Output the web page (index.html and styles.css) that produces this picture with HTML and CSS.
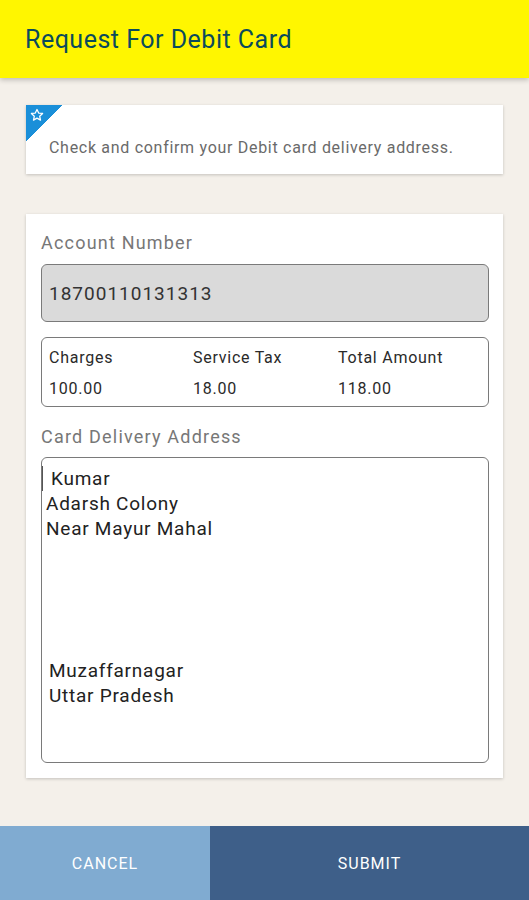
FILE: index.html
```html
<!DOCTYPE html>
<html lang="en">
<head>
    <meta charset="UTF-8">
    <meta name="viewport" content="width=device-width, initial-scale=1.0">
    <title>Request For Debit Card</title>
    <link rel="stylesheet" href="styles.css">
</head>
<body>
    <div id="app">
        <header class="toolbar">
            <h1>Request For Debit Card</h1>
        </header>

        <main class="content">
            <!-- Info note -->
            <div class="note">
                <span class="note-badge">
                    <svg width="14" height="14" viewBox="0 0 24 24">
                        <path d="M12 2.5l2.9 6.2 6.7.7-5 4.6 1.4 6.7L12 17.3l-6 3.4 1.4-6.7-5-4.6 6.7-.7z" fill="none" stroke="#fff" stroke-width="2.2" stroke-linejoin="round"/>
                    </svg>
                </span>
                <p>Check and confirm your Debit card delivery address.</p>
            </div>

            <!-- Form card -->
            <div class="card">
                <label class="field-label">Account Number</label>
                <div class="account-box">18700110131313</div>

                <div class="charges">
                    <div class="charge-col">
                        <span class="charge-name">Charges</span>
                        <span class="charge-value">100.00</span>
                    </div>
                    <div class="charge-col">
                        <span class="charge-name">Service Tax</span>
                        <span class="charge-value">18.00</span>
                    </div>
                    <div class="charge-col">
                        <span class="charge-name">Total Amount</span>
                        <span class="charge-value">118.00</span>
                    </div>
                </div>

                <label class="field-label address-label">Card Delivery Address</label>
                <div class="address-box">
                    <div class="addr-line first">Kumar</div>
                    <div class="addr-line">Adarsh Colony</div>
                    <div class="addr-line">Near Mayur Mahal</div>
                    <div class="addr-gap"></div>
                    <div class="addr-line city">Muzaffarnagar</div>
                    <div class="addr-line city">Uttar Pradesh</div>
                </div>
            </div>
        </main>

        <footer class="actions">
            <button class="btn-cancel">Cancel</button>
            <button class="btn-submit">Submit</button>
        </footer>
    </div>
</body>
</html>
```

FILE: styles.css
```css
/* General Page Styling */
body {
    margin: 0;
    background-color: #f4f0ea;
    font-family: Roboto, "Noto Sans", Arial, sans-serif;
}

#app {
    height: 900px;
    display: flex;
    flex-direction: column;
    overflow: hidden;
}

/* Toolbar */
.toolbar {
    height: 78px;
    background-color: #fff600;
    box-shadow: 0 2px 5px rgba(0, 0, 0, 0.22);
    display: flex;
    align-items: center;
    padding-left: 25px;
    position: relative;
    z-index: 1;
}

.toolbar h1 {
    margin: 0;
    font-size: 25px;
    letter-spacing: 0.5px;
    font-weight: 400;
    color: #0b4b5c;
    padding-top: 1px;
}

.content {
    flex: 1;
    padding: 27px 26px 0 26px;
}

/* Info note */
.note {
    position: relative;
    background-color: #ffffff;
    height: 69px;
    box-shadow: 0 1px 3px rgba(0, 0, 0, 0.2);
    overflow: hidden;
}

.note-badge {
    position: absolute;
    top: 0;
    left: 0;
    width: 36px;
    height: 36px;
    background: linear-gradient(135deg, #1a8fd9 50%, transparent 50%);
}

.note-badge svg {
    position: absolute;
    top: 3px;
    left: 4px;
}

.note p {
    margin: 0;
    padding: 33px 0 0 23px;
    font-size: 16px;
    letter-spacing: 0.7px;
    color: #6a6a6a;
}

/* Form card */
.card {
    margin-top: 40px;
    background-color: #ffffff;
    box-shadow: 0 1px 3px rgba(0, 0, 0, 0.2);
    padding: 18px 14px 15px 15px;
}

.field-label {
    display: block;
    font-size: 18px;
    letter-spacing: 1.2px;
    color: #777777;
    line-height: 22px;
}

.account-box {
    margin-top: 10px;
    height: 58px;
    box-sizing: border-box;
    border: 1px solid #7a7a7a;
    border-radius: 6px;
    background-color: #dadada;
    display: flex;
    align-items: center;
    padding-left: 7px;
    font-size: 19px;
    letter-spacing: 1px;
    color: #333333;
}

.charges {
    margin-top: 15px;
    height: 70px;
    box-sizing: border-box;
    border: 1px solid #7a7a7a;
    border-radius: 6px;
    display: grid;
    grid-template-columns: 144px 145px 1fr;
    padding: 10px 0 0 7px;
}

.charge-col {
    display: flex;
    flex-direction: column;
    gap: 11px;
}

.charge-name,
.charge-value {
    font-size: 16px;
    letter-spacing: 0.75px;
    color: #2a2a2a;
    line-height: 20px;
}

.address-label {
    margin-top: 19px;
}

.address-box {
    margin-top: 9px;
    height: 306px;
    box-sizing: border-box;
    border: 1px solid #7a7a7a;
    border-radius: 6px;
    padding: 8px 0 0 4px;
}

.addr-line {
    font-size: 19px;
    letter-spacing: 0.75px;
    color: #222222;
    line-height: 25px;
}

.addr-line.first {
    border-left: 1px solid #555555;
    margin-left: -4px;
    padding-left: 8px;
}

.addr-line.city {
    padding-left: 3px;
}

.addr-gap {
    height: 117px;
}

/* Bottom buttons */
.actions {
    height: 74px;
    display: flex;
}

.actions button {
    border: none;
    color: #ffffff;
    font-family: inherit;
    font-size: 16px;
    letter-spacing: 1px;
    text-transform: uppercase;
    cursor: pointer;
}

.btn-cancel {
    width: 210px;
    background-color: #80abd1;
}

.btn-submit {
    flex: 1;
    background-color: #3e5f89;
}
```
